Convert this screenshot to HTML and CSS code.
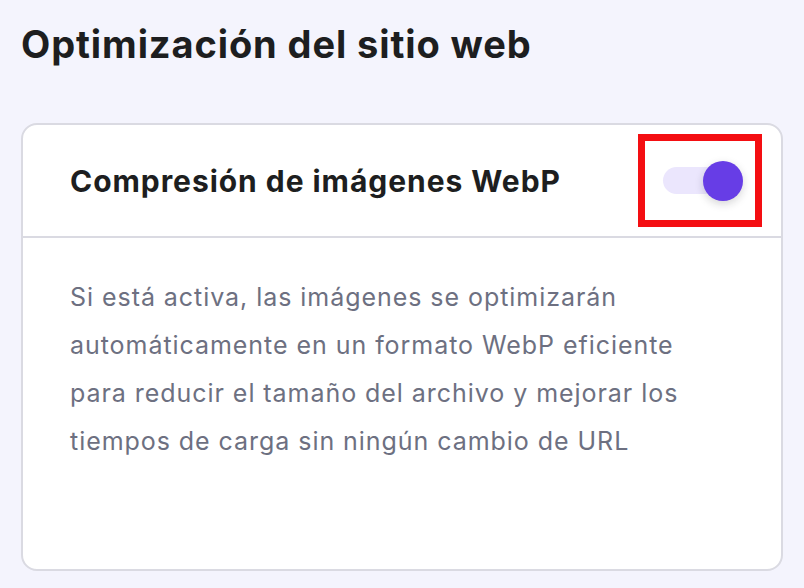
FILE: index.html
```html
<!DOCTYPE html>
<html lang="es">
<head>
  <meta charset="UTF-8" />
  <meta name="viewport" content="width=device-width, initial-scale=1" />
  <title>Optimización del sitio web</title>
  <link rel="stylesheet" href="styles.css">
</head>
<body>

<main class="page">
  <h1 class="page-title">Optimización del sitio web</h1>

  <section class="card">
    <div class="card-header">
      <h2>Compresión de imágenes WebP</h2>
      <label class="switch">
        <input type="checkbox" checked />
        <span class="track"></span>
        <span class="knob"></span>
        <span class="highlight"></span>
      </label>
    </div>
    <div class="card-body">
      <p>
        Si está activa, las imágenes se optimizarán<br>
        automáticamente en un formato WebP eficiente<br>
        para reducir el tamaño del archivo y mejorar los<br>
        tiempos de carga sin ningún cambio de URL
      </p>
    </div>
  </section>
</main>

</body>
</html>
```

FILE: styles.css
```css
* {
  margin: 0; padding: 0; box-sizing: border-box;
}
body {
  font-family: Inter, 'Noto Sans', sans-serif;
  background: #f4f4fd;
  color: #1d1e20;
  overflow: hidden;
}

.page {
  padding: 22px 21px 0;
}
.page-title {
  font-size: 38px;
  font-weight: 700;
  line-height: 44px;
  letter-spacing: 0.9px;
}

.card {
  margin-top: 57px;
  background: #fff;
  border: 2px solid #dadae2;
  border-radius: 16px;
  height: 448px;
}
.card-header {
  display: flex;
  align-items: center;
  justify-content: space-between;
  height: 113px;
  padding: 0 38px 0 47px;
  border-bottom: 2px solid #dadae2;
}
.card-header h2 {
  font-size: 30px;
  font-weight: 700;
  letter-spacing: 0.95px;
}

/* toggle */
.switch {
  position: relative;
  width: 80px;
  height: 40px;
  display: flex;
  align-items: center;
}
.switch input {
  display: none;
}
.track {
  width: 78px;
  height: 27px;
  border-radius: 14px;
  background: #ebe6fd;
}
.knob {
  position: absolute;
  right: 0;
  top: 0;
  width: 40px;
  height: 40px;
  border-radius: 50%;
  background: #673de6;
  box-shadow: 0 3px 8px rgba(29, 30, 32, 0.18);
}
.highlight {
  position: absolute;
  left: -25px;
  top: -27px;
  width: 124px;
  height: 93px;
  border: 7px solid #f40e12;
}

.card-body {
  padding: 35px 47px;
}
.card-body p {
  font-size: 25px;
  line-height: 48px;
  color: #6d7081;
  letter-spacing: 0.95px;
}
```
